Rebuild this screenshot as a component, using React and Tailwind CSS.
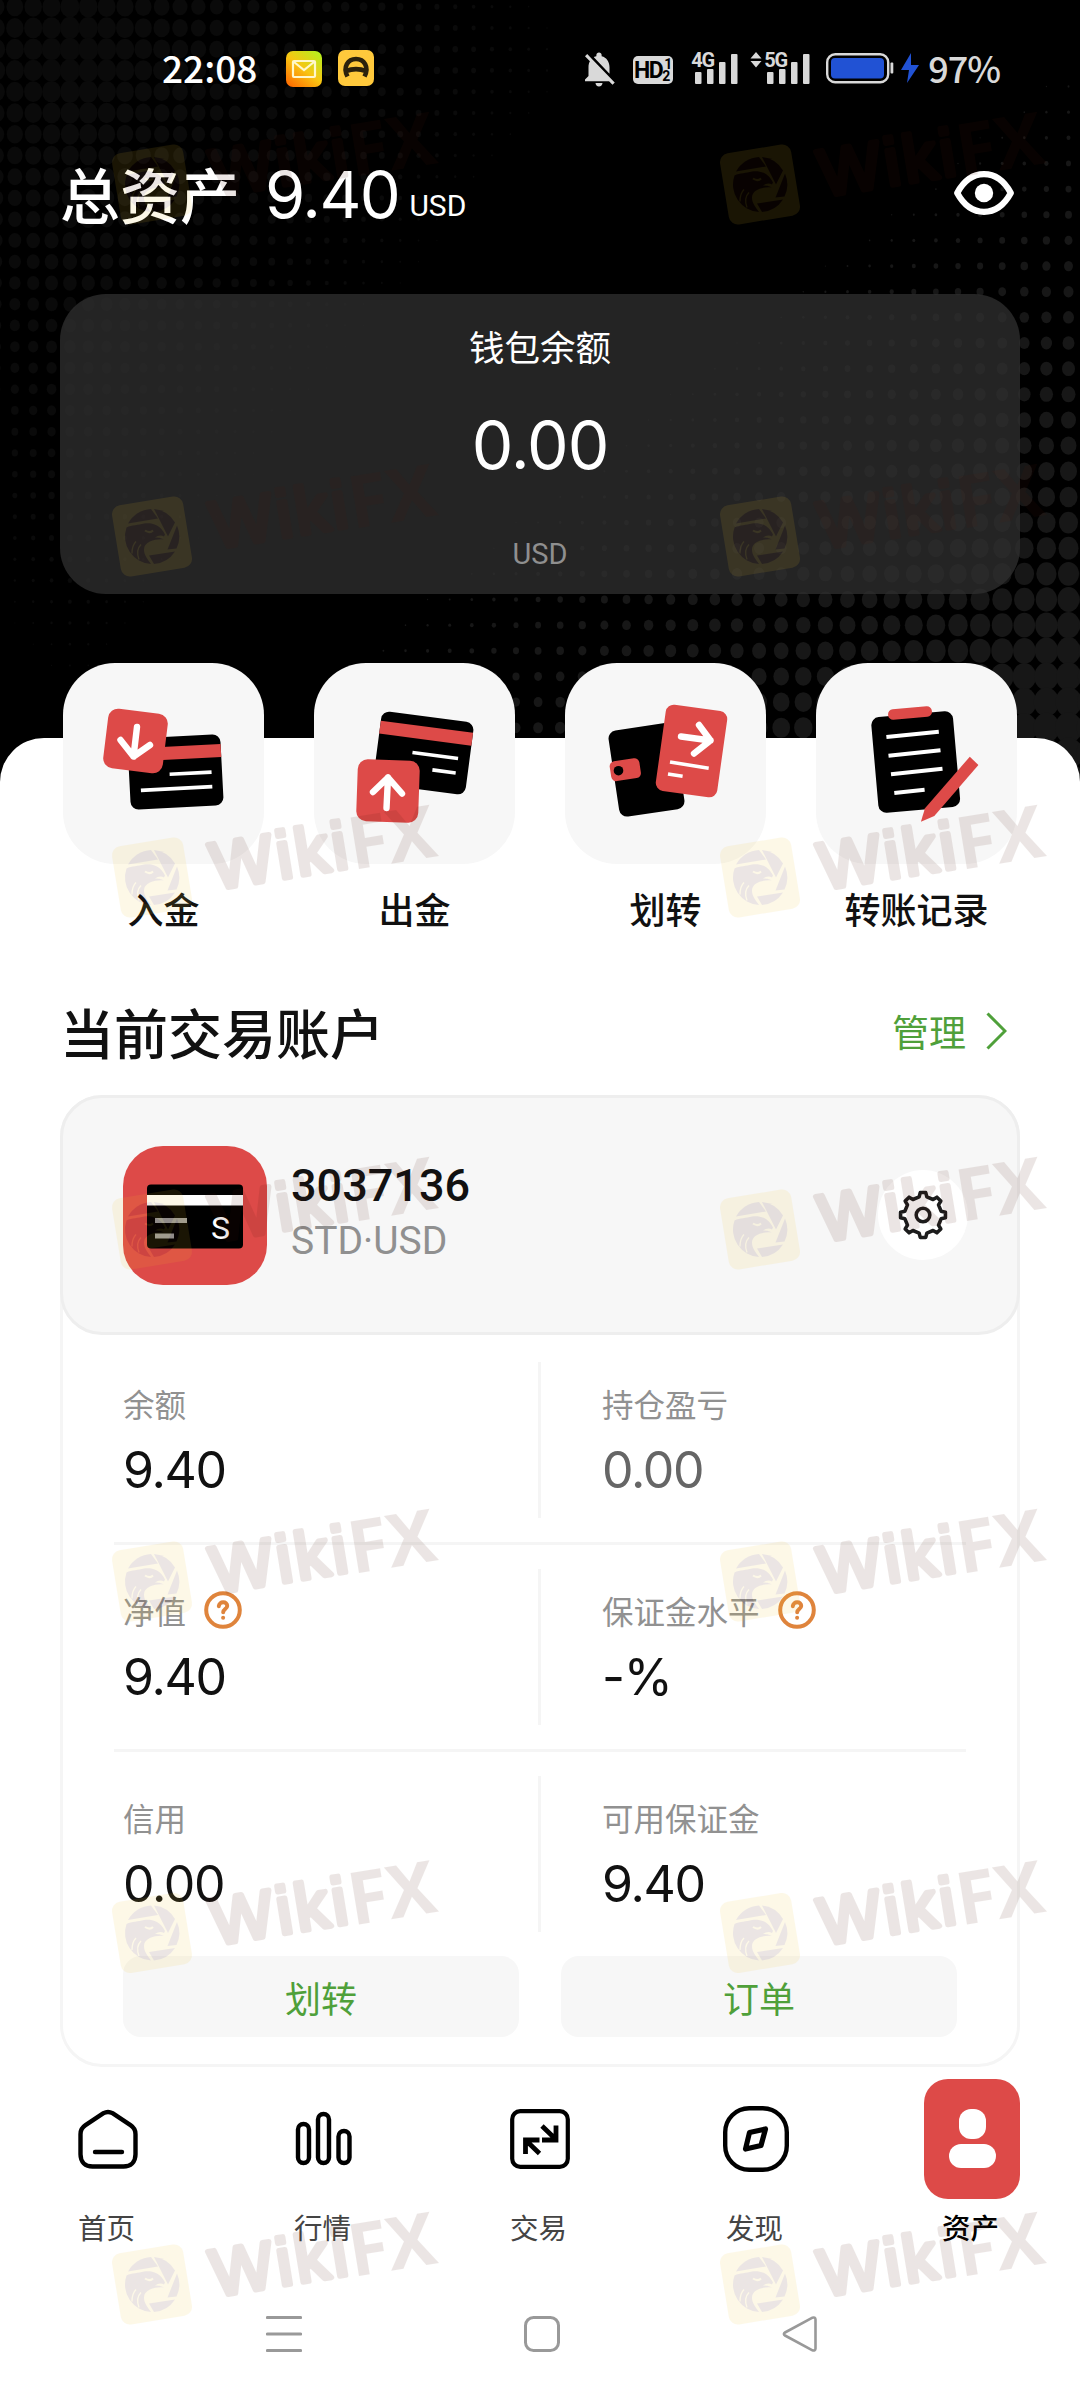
import React from 'react';
import { MdNotificationsOff } from 'react-icons/md';

const CJK = "font-['Noto_Sans_CJK_SC',sans-serif]";
const NUM = "font-['Inter',sans-serif]";
const LATIN = "font-['Roboto',sans-serif]";

const accountRows = [
  [
    { label: '余额', value: '9.40' },
    { label: '持仓盈亏', value: '0.00', muted: true },
  ],
  [
    { label: '净值', value: '9.40', help: true },
    { label: '保证金水平', value: '-%', help: true },
  ],
  [
    { label: '信用', value: '0.00' },
    { label: '可用保证金', value: '9.40' },
  ],
];

// Halftone dots: a dim field top left and a brighter one bottom right
const buildDots = () => {
  const dots = [];
  for (let x = -3.5; x < 560; x += 18.35) {
    for (let y = 6.7; y < 700; y += 21.25) {
      const r = 10.4 - Math.abs(x - 75) * 0.0195 - Math.abs(y - 60) * 0.0155;
      if (r > 0.5) dots.push({ x, y, r, fill: '#0a0a0a' });
    }
  }
  for (let x = 383.4; x < 1100; x += 22.1) {
    for (let y = 35.2; y < 800; y += 25.65) {
      const r = 11 - (1068 - x) * 0.0162 - (600 - y) * 0.0195;
      if (r > 0.5) dots.push({ x, y, r, fill: '#171717' });
    }
  }
  return dots;
};

const DotBackground = () => (
  <svg className="absolute left-0 top-0" width="1080" height="800">
    <rect width="1080" height="800" fill="#000" />
    {buildDots().map((d, i) => (
      <ellipse key={i} cx={d.x} cy={d.y} rx={d.r} ry={d.r * 1.14} fill={d.fill} />
    ))}
  </svg>
);

const SignalBars = () => (
  <svg width="44" height="32" viewBox="0 0 44 32" fill="#d9d9d9">
    <rect x="0" y="20" width="6.5" height="12" rx="1" />
    <rect x="12" y="17" width="6.5" height="15" rx="1" />
    <rect x="24" y="10" width="6.5" height="22" rx="1" />
    <rect x="36" y="2" width="6.5" height="30" rx="1" />
  </svg>
);

const StatusBar = () => (
  <div className="flex h-[138px] items-center pl-[162px] pr-[80px]">
    <span className={`${CJK} -mt-[4px] w-[124px] text-[37px] font-medium leading-none text-white`}>22:08</span>
    <svg width="36" height="36" viewBox="0 0 36 36">
      <defs>
        <linearGradient id="mail" x1="0.1" y1="1" x2="0.9" y2="0">
          <stop offset="0" stopColor="#ff6a00" />
          <stop offset="0.5" stopColor="#f8c512" />
          <stop offset="1" stopColor="#b4f01e" />
        </linearGradient>
      </defs>
      <rect width="36" height="36" rx="7" fill="url(#mail)" />
      <rect x="7" y="10" width="22" height="16" rx="1" fill="none" stroke="#fff7c9" strokeWidth="2.2" />
      <path d="M8 11l10 8 10-8" fill="none" stroke="#fff7c9" strokeWidth="2.2" />
    </svg>
    <svg className="ml-4 -mt-[2px]" width="36" height="36" viewBox="0 0 36 36">
      <rect width="36" height="36" rx="7" fill="#ffc93c" />
      <path
        d="M9.500 26.500C4.500 17 10 9 18 9S31.500 17 26.500 26.500M8 21c6-2.300 14-2.300 20 0"
        fill="none"
        stroke="#2b210c"
        strokeWidth="4.600"
      />
    </svg>
    <div className="ml-auto flex items-center">
      <MdNotificationsOff className="text-[42px] text-[#d9d9d9]" />
      <div className="ml-[13px] mt-[2px] flex h-7 w-10 items-center justify-center rounded-[5px] bg-[#d9d9d9] text-black">
        <span className={`${LATIN} text-[23px] font-bold leading-none tracking-[-1.5px]`}>HD</span>
        <span className={`${LATIN} flex flex-col text-[14px] font-bold leading-[12px]`}>
          <span className="pl-[2px]">1</span>
          <span>2</span>
        </span>
      </div>
      <div className="relative ml-[22px] -mt-[2px]">
        <SignalBars />
        <span className={`${LATIN} absolute -left-[4px] -top-[2px] text-[20px] font-bold leading-[20px] tracking-[-1px] text-[#d9d9d9]`}>
          4G
        </span>
      </div>
      <div className="relative ml-[28px] -mt-[2px]">
        <SignalBars />
        <span className={`${LATIN} absolute -left-[3px] -top-[2px] text-[20px] font-bold leading-[20px] tracking-[-1px] text-[#d9d9d9]`}>
          5G
        </span>
        <svg className="absolute -left-[17px] top-0" width="12" height="16" viewBox="0 0 12 16" fill="#d9d9d9">
          <path d="M6 0l5.500 6.500H.5zM6 15.500l5.500-6.500H.5z" />
        </svg>
      </div>
      <svg className="ml-[15px] -mt-[2px]" width="94" height="32" viewBox="0 0 94 32">
        <rect x="1.200" y="2.200" width="61" height="28" rx="8" fill="none" stroke="#d9d9d9" strokeWidth="2.400" />
        <rect x="5" y="6" width="53" height="20.500" rx="4" fill="#2152d4" />
        <rect x="64.500" y="10.500" width="2.800" height="11" rx="1" fill="#d9d9d9" />
        <path d="M85 1L75 18h8l-2 13 12-18h-8z" fill="#2152d4" />
      </svg>
      <span className={`${CJK} ml-[8px] -mt-[4px] text-[36px] font-medium leading-none tracking-[-1px] text-[#d9d9d9]`}>97%</span>
    </div>
  </div>
);

const EyeIcon = () => (
  <svg width="60" height="44" viewBox="0 0 60 44">
    <path
      d="M3.200 22C10 9.500 19 3.200 30 3.200S50 9.500 56.800 22C50 34.500 41 40.800 30 40.800S10 34.500 3.200 22z"
      fill="none"
      stroke="#fff"
      strokeWidth="6.200"
      strokeLinejoin="round"
    />
    <circle cx="30" cy="22" r="9.200" fill="#fff" />
  </svg>
);

const Line = ({ d, w = 3.6 }) => <path d={d} stroke="#fff" strokeWidth={w} fill="none" />;

const Arrow = ({ d }) => (
  <path d={d} stroke="#fff" strokeWidth="6.400" strokeLinecap="round" strokeLinejoin="round" fill="none" />
);

const DepositIcon = () => (
  <svg width="201" height="201" viewBox="0 0 201 201">
    <g transform="translate(112.500 109) rotate(-3)">
      <rect x="-46.500" y="-35.500" width="93" height="71" rx="8" />
      <rect x="-46.500" y="-25.600" width="93" height="13" fill="#dd4a48" />
      <Line d="M-6 2h42" />
      <Line d="M-35.500 16.500h71.500" />
    </g>
    <rect x="42.500" y="48" width="60" height="60" rx="10" fill="#dd4a48" transform="rotate(7 72.500 78)" />
    <Arrow d="M74 64l-3.500 29.500M57.500 77l13 16.500L87 82" />
  </svg>
);

const WithdrawIcon = () => (
  <svg width="201" height="201" viewBox="0 0 201 201">
    <g transform="translate(109.500 90) rotate(7.500)">
      <rect x="-46.500" y="-36.500" width="93" height="73" rx="8" />
      <rect x="-46.500" y="-26.500" width="93" height="13" fill="#dd4a48" />
      <Line d="M-11 1h46" />
      <Line d="M11 15.600h23.500" />
    </g>
    <rect x="43" y="97" width="62" height="62" rx="10" fill="#dd4a48" transform="rotate(2 74 128)" />
    <Arrow d="M74 114.500l-1.500 30.500M59 129l15-14.500L88 130.500" />
  </svg>
);

const TransferIcon = () => (
  <svg width="201" height="201" viewBox="0 0 201 201">
    <rect x="48.500" y="63.300" width="66" height="87" rx="8" transform="rotate(-8.500 81.500 106.800)" />
    <rect x="45.300" y="96.700" width="30" height="20" rx="5" fill="#dd4a48" transform="rotate(-8.500 60.300 106.700)" />
    <circle cx="53.500" cy="107.700" r="4.800" />
    <rect x="95.500" y="44.500" width="62" height="87" rx="8" fill="#dd4a48" transform="rotate(8 126.500 88)" />
    <Arrow d="M116 73.500l29.500 4M134 62l11.500 15.500L129 90.500" />
    <Line d="M105 99l38.700 6.300" />
    <Line d="M103 111l14.600 2.300" />
  </svg>
);

const RecordIcon = () => (
  <svg width="201" height="201" viewBox="0 0 201 201">
    <rect x="58.700" y="51" width="82" height="96" rx="8" transform="rotate(-5 99.700 99)" />
    <rect x="72" y="44.800" width="44" height="10.500" rx="5" fill="#dd4a48" transform="rotate(-5 94 50)" />
    <Line w={4} d="M70.400 74l52.400-5.300M72.500 92.700l52-5.400M75 111.300l51.500-5.600M78.300 130l30.300-3.300" />
    <path d="M153.800 93.700l8.600 8.300-44.100 51-13.400 5.700 4.100-13.400z" fill="#dd4a48" />
  </svg>
);

const actions = [
  { label: '入金', icon: <DepositIcon /> },
  { label: '出金', icon: <WithdrawIcon /> },
  { label: '划转', icon: <TransferIcon /> },
  { label: '转账记录', icon: <RecordIcon /> },
];

const ActionTile = ({ label, icon }) => (
  <div className="flex w-[201px] flex-col items-center">
    <div className="h-[201px] w-[201px] rounded-[52px] bg-[#f7f7f7]">{icon}</div>
    <span className={`${CJK} mt-[22px] whitespace-nowrap text-[36px] font-medium leading-[44px] text-[#111]`}>{label}</span>
  </div>
);

const GearIcon = () => {
  const points = [];
  for (let i = 0; i < 8; i++) {
    [[-12, 18.5], [-7, 22.6], [7, 22.6], [12, 18.5]].forEach(([deg, r]) => {
      const a = ((i * 45 + deg - 90) * Math.PI) / 180;
      points.push(`${(25 + r * Math.cos(a)).toFixed(2)},${(25 + r * Math.sin(a)).toFixed(2)}`);
    });
  }
  return (
    <svg width="50" height="50" viewBox="0 0 50 50" fill="none" stroke="#1c1c1c" strokeWidth="3.600" strokeLinejoin="round">
      <polygon points={points.join(' ')} />
      <circle cx="25" cy="25" r="6.800" />
    </svg>
  );
};

const HelpIcon = () => (
  <svg className="ml-[18px]" width="38" height="38" viewBox="0 0 38 38" fill="none" stroke="#df843c">
    <circle cx="19" cy="19" r="16.800" strokeWidth="4" />
    <path d="M14.800 15.200c.4-5.400 8.600-5 8.400-.2-.1 3-4 3.200-4 6.300" strokeWidth="4" strokeLinecap="round" />
    <circle cx="19.100" cy="26.800" r="2" fill="#df843c" stroke="none" />
  </svg>
);

const DataCell = ({ label, value, muted, help, className }) => (
  <div className={`${className} pt-[47px]`}>
    <div className="flex h-9 items-center">
      <span className={`${CJK} text-[31.5px] leading-9 text-[#919191]`}>{label}</span>
      {help && <HelpIcon />}
    </div>
    <p className={`${NUM} mt-[23px] text-[50px] leading-[52px] tracking-[-1.3px] ${muted ? 'text-[#666]' : 'text-[#111]'}`}>{value}</p>
  </div>
);

const AccountCard = () => (
  <div className="mx-[60px] h-[972px] rounded-[42px] border-[3px] border-[#f5f5f5]">
    <div className="-mx-[3px] -mt-[3px] flex h-[240px] items-center rounded-[42px] border-[3px] border-[#eee] bg-[#f7f7f7] pl-[60px] pr-[49px]">
      <svg width="144" height="139" viewBox="0 0 144 139">
        <rect width="144" height="139" rx="40" fill="#dd4a48" />
        <rect x="24" y="38.500" width="96" height="64" rx="4" />
        <rect x="24" y="49" width="96" height="10.500" fill="#fff" />
        <path d="M32 74.500h32M32 90h19" stroke="#999" strokeWidth="5" />
        <text x="88" y="93" fontFamily="Roboto, sans-serif" fontSize="32" fill="#fff">S</text>
      </svg>
      <div className={`${LATIN} -mt-[3px] ml-[24px]`}>
        <p className="text-[45px] font-medium leading-[54px] text-[#111]">3037136</p>
        <p className="mt-px text-[39px] leading-[54px] text-[#909090]">STD·USD</p>
      </div>
      <div className="ml-auto flex h-[90px] w-[90px] items-center justify-center rounded-full bg-white">
        <GearIcon />
      </div>
    </div>

    <div className="px-[51px] pt-[3px]">
      {accountRows.map((row, i) => (
        <div key={i} className={`flex ${i < 2 ? 'h-[207px] border-b-[3px] border-[#f5f5f5]' : 'h-[204px]'}`}>
          <DataCell {...row[0]} className="w-[424px] pl-[9px]" />
          <div className="mt-6 h-[156px] w-[3px] bg-[#f5f5f5]" />
          <DataCell {...row[1]} className="flex-1 pl-[61px]" />
        </div>
      ))}
      <div className="flex gap-[42px] pl-[9px]">
        {['划转', '订单'].map((text) => (
          <button key={text} className={`${CJK} h-[81px] w-[396px] rounded-[18px] bg-[#f7f7f7] text-[36px] text-[#4fa03a]`}>
            {text}
          </button>
        ))}
      </div>
    </div>
  </div>
);

const HomeIcon = () => (
  <svg width="60" height="60" viewBox="0 0 60 60" fill="none" stroke="#000" strokeWidth="4.400" strokeLinecap="round" strokeLinejoin="round">
    <path d="M25.500 4.200c3-1.700 6-1.700 9 0l18 12c3.500 2.300 5 5 5 9v20c0 8-5 12.300-12 12.300h-31c-7 0-12-4.300-12-12.300v-20c0-4 1.500-6.700 5-9z" />
    <path d="M17 43h27" />
  </svg>
);

const MarketIcon = () => (
  <svg width="60" height="60" viewBox="0 0 60 60" fill="none" stroke="#000" strokeWidth="4.400">
    <rect x="4" y="15" width="11" height="39" rx="5.500" />
    <rect x="24" y="5" width="11" height="49" rx="5.500" />
    <rect x="44.500" y="22" width="11" height="32" rx="5.500" />
  </svg>
);

const TradeIcon = () => (
  <svg width="60" height="60" viewBox="0 0 60 60" fill="none" stroke="#000" strokeWidth="4.200">
    <rect x="2.200" y="2.200" width="55.600" height="55.600" rx="8" />
    <path d="M32 17l14 13.500M46 16.500V31H32M29.500 44.500l-14-13.500M15.500 45V31H29.500" strokeWidth="4.800" />
  </svg>
);

const DiscoverIcon = () => (
  <svg width="66" height="66" viewBox="0 0 66 66" fill="none" stroke="#000">
    <rect x="2.200" y="2.200" width="61.600" height="61.600" rx="24" strokeWidth="4.400" />
    <path d="M26.500 26.500l16-3.500-4.500 16.500-15.500 3.500z" strokeWidth="5.200" strokeLinejoin="round" />
  </svg>
);

const ProfileIcon = () => (
  <div className="flex h-[120px] w-[96px] flex-col items-center rounded-[24px] bg-[#dd4a48] pt-[30px]">
    <div className="h-[30px] w-[27px] rounded-[12px] bg-white" />
    <div className="mt-[5px] h-6 w-[47px] rounded-[12px] bg-white" />
  </div>
);

const tabs = [
  { label: '首页', icon: <HomeIcon /> },
  { label: '行情', icon: <MarketIcon /> },
  { label: '交易', icon: <TradeIcon /> },
  { label: '发现', icon: <DiscoverIcon /> },
  { label: '资产', icon: <ProfileIcon />, active: true },
];

const TabBar = () => (
  <div className="mt-3 grid grid-cols-5">
    {tabs.map((tab) => (
      <div key={tab.label} className="flex flex-col items-center">
        <div className="flex h-[120px] items-center">{tab.icon}</div>
        <span
          className={`${CJK} mt-[8px] pr-[3px] text-[28.5px] leading-10 ${tab.active ? 'font-medium text-black' : 'text-[#444]'}`}
        >
          {tab.label}
        </span>
      </div>
    ))}
  </div>
);

const SystemNav = () => (
  <div className="mt-[68px] flex pl-[266px]">
    <svg width="36" height="38" viewBox="0 0 36 38" stroke="#999" strokeWidth="3.200" strokeLinecap="round">
      <path d="M1.500 2.500h33M1.500 19h33M1.500 35.500h33" />
    </svg>
    <svg className="ml-[222px]" width="36" height="38" viewBox="0 0 36 38" fill="none" stroke="#999" strokeWidth="3">
      <rect x="1.500" y="2.500" width="33" height="33" rx="8" />
    </svg>
    <svg className="ml-[222px]" width="36" height="38" viewBox="0 0 36 38" fill="none" stroke="#999" strokeWidth="2.600" strokeLinejoin="round">
      <path d="M3 17.500L30.500 2.700c1.500-.7 3 .1 3 1.800v29c0 1.700-1.500 2.500-3 1.800L3 20.500c-1.500-.8-1.500-2.200 0-3z" />
    </svg>
  </div>
);

const watermarkRows = [184.5, 536.5, 877.5, 1229.5, 1581.5, 1933, 2284.5];

const Watermark = ({ x, y }) => (
  <g transform={`translate(${x} ${y})`}>
    <g transform="rotate(-9.300)">
      <rect x="-36" y="-36" width="72" height="72" rx="9" fill="#f0c42c" />
      <text x="60" y="22" textLength="137" fontFamily="Liberation Sans, sans-serif" fontSize="66" strokeWidth="5.500" stroke="#501a0c" strokeLinejoin="round" fill="#501a0c">
        Wiki
      </text>
      <text x="199" y="25" textLength="88" fontFamily="Noto Sans, sans-serif" fontSize="73" fontWeight="700" fill="#501a0c">
        FX
      </text>
    </g>
    <g fill="#501a0c">
      <path d="M-24-13A27.500 27.500 0 0 1-1-27.500L6-18z" />
      <path d="M2-27.500A27.500 27.500 0 0 1 23-14L16 0z" />
      <path d="M25-11A27.500 27.500 0 0 1 24.500 12L15.500 13z" />
      <path d="M23 15A27.500 27.500 0 0 1 2 27.500L-3 19z" />
      <path d="M-25.500-9C-20-12-14-11-8-13C-2-14 8-13 13-2L12 0C9-2 6-1 3 1C8 1 10 2 12 3C6 2-8 4-8 13C-8 19-4 23-1 27.500A27.500 27.500 0 0 1-25.500-9z" />
    </g>
    <path d="M-7-6C-4-4-1-4 1-6" stroke="#f0c42c" strokeWidth="2" fill="none" />
    <path d="M-13 23C-16 15-13 10-11 8M-20 17C-20 10-18 7-16 5" stroke="#f0c42c" strokeWidth="1.300" fill="none" />
  </g>
);

const WatermarkLayer = () => (
  <svg className="pointer-events-none absolute left-0 top-0 opacity-[0.105]" width="1080" height="2400">
    {watermarkRows.map((y) => (
      <React.Fragment key={y}>
        <Watermark x={152} y={y} />
        <Watermark x={760} y={y} />
      </React.Fragment>
    ))}
  </svg>
);

const App = () => (
  <div className="relative h-[2400px] w-[1080px] overflow-hidden bg-white">
    <DotBackground />

    {/* Header */}
    <div className="relative h-[738px]">
      <StatusBar />
      <div className="flex h-[112px] items-center pl-[60px] pr-[66px] text-white">
        <span className={`${CJK} -mt-[3px] text-[60px] font-medium leading-none`}>总资产</span>
        <span className={`${NUM} ml-[25px] text-[65px] leading-none tracking-[-1.5px]`}>9.40</span>
        <span className={`${LATIN} ml-[10px] mt-6 text-[30px] leading-none`}>USD</span>
        <div className="ml-auto -mt-[2px]">
          <EyeIcon />
        </div>
      </div>
      <div className="mx-[60px] mt-[44px] flex h-[300px] flex-col items-center rounded-[46px] bg-[#303030]/75">
        <span className={`${CJK} mt-[30px] text-[35.5px] leading-[44px] text-white`}>钱包余额</span>
        <span className={`${NUM} mt-[43px] text-[66px] leading-[68px] tracking-[-1px] text-white`}>0.00</span>
        <span className={`${LATIN} mt-[59px] text-[29px] leading-[32px] text-[#8f8f8f]`}>USD</span>
      </div>
    </div>

    {/* Main sheet */}
    <div className="relative flow-root h-[1662px] rounded-t-[44px] bg-white">
      <div className="-mt-[75px] flex justify-between px-[63px]">
        {actions.map((action) => (
          <ActionTile key={action.label} {...action} />
        ))}
      </div>
      <div className="mt-[62px] flex h-20 items-center justify-between pl-[60px] pr-[73px]">
        <h2 className={`${CJK} text-[54px] font-medium leading-none text-[#111]`}>当前交易账户</h2>
        <div className="flex items-center gap-5">
          <span className={`${CJK} -mt-[2px] text-[37px] leading-none text-[#4fa03a]`}>管理</span>
          <svg className="-mt-[2px]" width="21" height="38" viewBox="0 0 21 38" fill="none" stroke="#4fa03a" strokeWidth="3">
            <path d="M1.500 1.500L19 19 1.500 36.500" />
          </svg>
        </div>
      </div>
      <div className="h-[23px]" />
      <AccountCard />
      <TabBar />
      <SystemNav />
    </div>

    <WatermarkLayer />
  </div>
);

export default App;
